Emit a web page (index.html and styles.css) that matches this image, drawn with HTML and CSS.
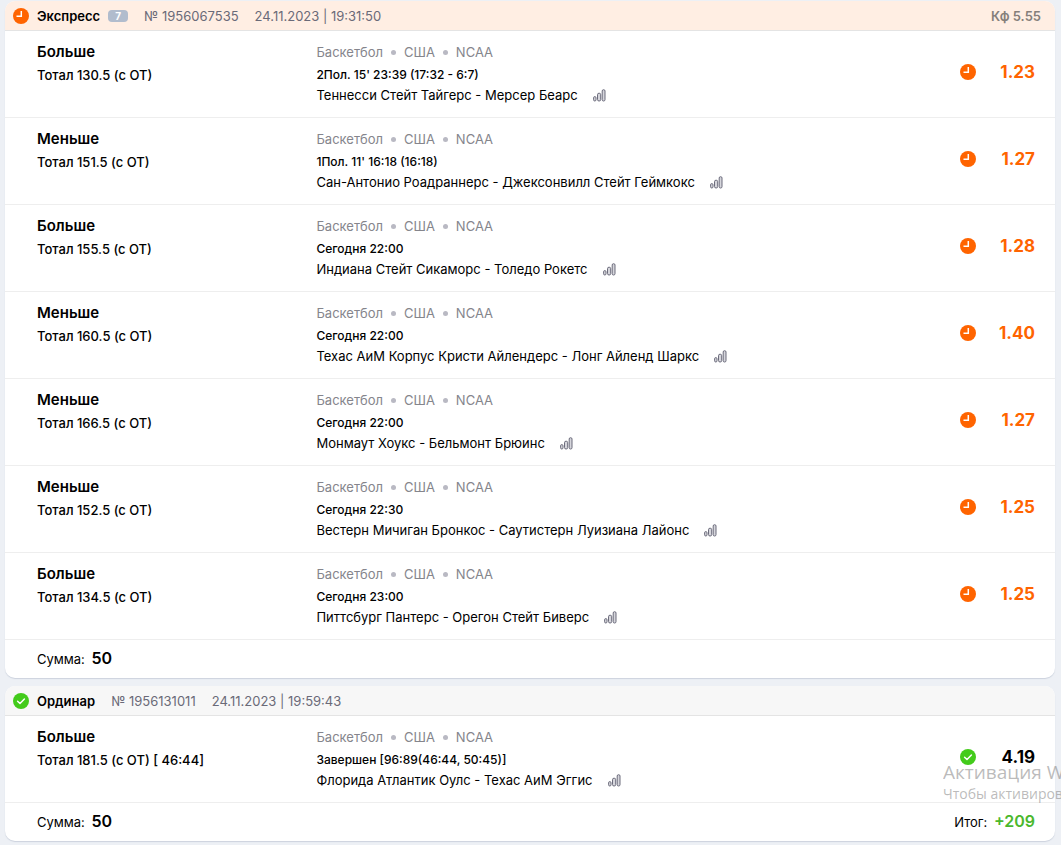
FILE: index.html
```html
<!DOCTYPE html>
<html lang="ru">
<head>
    <meta charset="UTF-8">
    <meta name="viewport" content="width=device-width, initial-scale=1.0">
    <title>История ставок</title>
    <link rel="stylesheet" href="styles.css">
</head>
<body>
    <svg class="sprite" aria-hidden="true">
        <symbol id="icon-clock" viewBox="0 0 16 16">
            <circle cx="8" cy="8" r="8" fill="#ff6400"/>
            <path d="M8.3 3v5.2H3.5" fill="none" stroke="#fff" stroke-width="1.5"/>
        </symbol>
        <symbol id="icon-check" viewBox="0 0 16 16">
            <circle cx="8" cy="8" r="8" fill="#43cb1b"/>
            <path d="M4.6 8.2l2.4 2.3 4.4-4.5" fill="none" stroke="#fff" stroke-width="1.5" stroke-linecap="round" stroke-linejoin="round"/>
        </symbol>
        <symbol id="icon-stats" viewBox="0 0 13 13">
            <g fill="#d6d6dc" stroke="#6c6c7c">
                <rect x="0.6" y="7.6" width="2.4" height="4.4" rx="1.2"/>
                <rect x="4.5" y="4.2" width="3.2" height="7.8" rx="1.5"/>
                <rect x="9.2" y="0.7" width="2.8" height="11.3" rx="1.3"/>
            </g>
        </symbol>
    </svg>

    <main class="history">
        <section class="bet">
            <header class="bet-header express">
                <svg class="status-icon"><use href="#icon-clock"/></svg>
                <h2>Экспресс</h2>
                <span class="count">7</span>
                <span class="number">№ 1956067535</span>
                <time class="date">24.11.2023 | 19:31:50</time>
                <span class="total-coef">Кф 5.55</span>
            </header>

            <article class="event">
                <div class="outcome">
                    <h3>Больше</h3>
                    <p>Тотал 130.5 (с ОТ)</p>
                </div>
                <div class="match">
                    <div class="league"><span>Баскетбол</span><span>США</span><span>NCAA</span></div>
                    <div class="time">2Пол. 15' 23:39 (17:32 - 6:7)</div>
                    <div class="teams">Теннесси Стейт Тайгерс - Мерсер Беарс <a href="#" aria-label="Статистика"><svg class="stats-icon"><use href="#icon-stats"/></svg></a></div>
                </div>
                <div class="result">
                    <svg class="status-icon"><use href="#icon-clock"/></svg>
                    <span class="coef">1.23</span>
                </div>
            </article>

            <article class="event">
                <div class="outcome">
                    <h3>Меньше</h3>
                    <p>Тотал 151.5 (с ОТ)</p>
                </div>
                <div class="match">
                    <div class="league"><span>Баскетбол</span><span>США</span><span>NCAA</span></div>
                    <div class="time">1Пол. 11' 16:18 (16:18)</div>
                    <div class="teams">Сан-Антонио Роадраннерс - Джексонвилл Стейт Геймкокс <a href="#" aria-label="Статистика"><svg class="stats-icon"><use href="#icon-stats"/></svg></a></div>
                </div>
                <div class="result">
                    <svg class="status-icon"><use href="#icon-clock"/></svg>
                    <span class="coef">1.27</span>
                </div>
            </article>

            <article class="event">
                <div class="outcome">
                    <h3>Больше</h3>
                    <p>Тотал 155.5 (с ОТ)</p>
                </div>
                <div class="match">
                    <div class="league"><span>Баскетбол</span><span>США</span><span>NCAA</span></div>
                    <div class="time">Сегодня 22:00</div>
                    <div class="teams">Индиана Стейт Сикаморс - Толедо Рокетс <a href="#" aria-label="Статистика"><svg class="stats-icon"><use href="#icon-stats"/></svg></a></div>
                </div>
                <div class="result">
                    <svg class="status-icon"><use href="#icon-clock"/></svg>
                    <span class="coef">1.28</span>
                </div>
            </article>

            <article class="event">
                <div class="outcome">
                    <h3>Меньше</h3>
                    <p>Тотал 160.5 (с ОТ)</p>
                </div>
                <div class="match">
                    <div class="league"><span>Баскетбол</span><span>США</span><span>NCAA</span></div>
                    <div class="time">Сегодня 22:00</div>
                    <div class="teams">Техас АиМ Корпус Кристи Айлендерс - Лонг Айленд Шаркс <a href="#" aria-label="Статистика"><svg class="stats-icon"><use href="#icon-stats"/></svg></a></div>
                </div>
                <div class="result">
                    <svg class="status-icon"><use href="#icon-clock"/></svg>
                    <span class="coef">1.40</span>
                </div>
            </article>

            <article class="event">
                <div class="outcome">
                    <h3>Меньше</h3>
                    <p>Тотал 166.5 (с ОТ)</p>
                </div>
                <div class="match">
                    <div class="league"><span>Баскетбол</span><span>США</span><span>NCAA</span></div>
                    <div class="time">Сегодня 22:00</div>
                    <div class="teams">Монмаут Хоукс - Бельмонт Брюинс <a href="#" aria-label="Статистика"><svg class="stats-icon"><use href="#icon-stats"/></svg></a></div>
                </div>
                <div class="result">
                    <svg class="status-icon"><use href="#icon-clock"/></svg>
                    <span class="coef">1.27</span>
                </div>
            </article>

            <article class="event">
                <div class="outcome">
                    <h3>Меньше</h3>
                    <p>Тотал 152.5 (с ОТ)</p>
                </div>
                <div class="match">
                    <div class="league"><span>Баскетбол</span><span>США</span><span>NCAA</span></div>
                    <div class="time">Сегодня 22:30</div>
                    <div class="teams">Вестерн Мичиган Бронкос - Саутистерн Луизиана Лайонс <a href="#" aria-label="Статистика"><svg class="stats-icon"><use href="#icon-stats"/></svg></a></div>
                </div>
                <div class="result">
                    <svg class="status-icon"><use href="#icon-clock"/></svg>
                    <span class="coef">1.25</span>
                </div>
            </article>

            <article class="event">
                <div class="outcome">
                    <h3>Больше</h3>
                    <p>Тотал 134.5 (с ОТ)</p>
                </div>
                <div class="match">
                    <div class="league"><span>Баскетбол</span><span>США</span><span>NCAA</span></div>
                    <div class="time">Сегодня 23:00</div>
                    <div class="teams">Питтсбург Пантерс - Орегон Стейт Биверс <a href="#" aria-label="Статистика"><svg class="stats-icon"><use href="#icon-stats"/></svg></a></div>
                </div>
                <div class="result">
                    <svg class="status-icon"><use href="#icon-clock"/></svg>
                    <span class="coef">1.25</span>
                </div>
            </article>

            <footer class="bet-footer">
                <div>Сумма: <b>50</b></div>
            </footer>
        </section>

        <section class="bet">
            <header class="bet-header">
                <svg class="status-icon"><use href="#icon-check"/></svg>
                <h2>Ординар</h2>
                <span class="number">№ 1956131011</span>
                <time class="date">24.11.2023 | 19:59:43</time>
            </header>

            <article class="event">
                <div class="outcome">
                    <h3>Больше</h3>
                    <p>Тотал 181.5 (с ОТ) [ 46:44]</p>
                </div>
                <div class="match">
                    <div class="league"><span>Баскетбол</span><span>США</span><span>NCAA</span></div>
                    <div class="time">Завершен [96:89(46:44, 50:45)]</div>
                    <div class="teams">Флорида Атлантик Оулс - Техас АиМ Эггис <a href="#" aria-label="Статистика"><svg class="stats-icon"><use href="#icon-stats"/></svg></a></div>
                </div>
                <div class="result won">
                    <svg class="status-icon"><use href="#icon-check"/></svg>
                    <span class="coef">4.19</span>
                </div>
            </article>

            <footer class="bet-footer">
                <div>Сумма: <b>50</b></div>
                <div>Итог: <b class="profit">+209</b></div>
            </footer>
        </section>
    </main>

    <div class="activation">
        <div class="activation-title">Активация W</div>
        <div>Чтобы активиров</div>
    </div>
</body>
</html>
```
FILE: styles.css
```css
* {
    box-sizing: border-box;
}
body {
    margin: 0;
    background-color: #edf0f5;
    color: #000;
    font-family: Inter, "Liberation Sans", sans-serif;
    font-size: 13px;
    line-height: 20px;
}
h2, h3, p {
    margin: 0;
}
.sprite {
    display: none;
}
.history {
    display: flex;
    flex-direction: column;
    gap: 8px;
    padding: 1px 6px 4px 5px;
}
.bet {
    background-color: #fff;
    border-radius: 10px;
    box-shadow: 0 1px 1px #ccd2de;
    overflow: hidden;
}
.bet-header {
    display: flex;
    align-items: center;
    height: 30px;
    padding: 0 14px 0 8px;
    background-color: #f7f7f7;
    border-bottom: 1px solid #e4e4e4;
    color: #6a6a78;
}
.bet-header.express {
    background-color: #ffeee3;
}
.bet-header h2 {
    margin-left: 8px;
    color: #000;
    font-size: 13px;
    font-weight: 600;
}
.count {
    width: 20px;
    margin-left: 8px;
    border-radius: 4px;
    background-color: #b1bccd;
    color: #fff;
    font-size: 10px;
    font-weight: 700;
    line-height: 12px;
    text-align: center;
}
.number, .date {
    margin-left: 16px;
}
.total-coef {
    margin-left: auto;
    color: #857f7b;
    font-weight: 600;
}
.status-icon {
    flex: none;
    width: 16px;
    height: 16px;
}
.event {
    display: flex;
    padding: 11px 20px 12px 32px;
    border-bottom: 1px solid #eee;
}
.outcome {
    width: 28%;
    font-weight: 500;
}
.outcome h3 {
    margin-bottom: 3px;
    font-size: 15px;
    font-weight: 600;
}
.match {
    flex: 1;
}
.league {
    display: flex;
    align-items: center;
    margin-bottom: 3px;
    color: #85858c;
}
.league span + span::before {
    content: "";
    display: inline-block;
    width: 5px;
    height: 5px;
    margin: 0 8px;
    border-radius: 50%;
    background-color: #b9b9c3;
    vertical-align: 2px;
}
.time {
    font-size: 12px;
    font-weight: 500;
}
.teams {
    display: flex;
    align-items: center;
    gap: 15px;
}
.stats-icon {
    display: block;
    width: 13px;
    height: 13px;
}
.result {
    display: flex;
    align-items: center;
    align-self: flex-start;
    justify-content: space-between;
    width: 75px;
    height: 60px;
    color: #ff6400;
}
.result.won {
    color: #000;
}
.coef {
    font-size: 17px;
    font-weight: 700;
}
.bet-footer {
    display: flex;
    justify-content: space-between;
    padding: 8px 20px 9px 32px;
}
.bet-footer b {
    margin-left: 3px;
    font-size: 16px;
    font-weight: 600;
}
.bet-footer .profit {
    color: #4bb82d;
}
/* системная надпись поверх страницы */
.activation {
    position: absolute;
    top: 760px;
    right: 0;
    width: 118px;
    overflow: hidden;
    color: rgba(120, 120, 120, 0.5);
    font-family: "Open Sans", "Noto Sans", sans-serif;
    font-size: 14px;
    white-space: nowrap;
    pointer-events: none;
}
.activation-title {
    font-size: 19px;
    line-height: 24px;
}
```
